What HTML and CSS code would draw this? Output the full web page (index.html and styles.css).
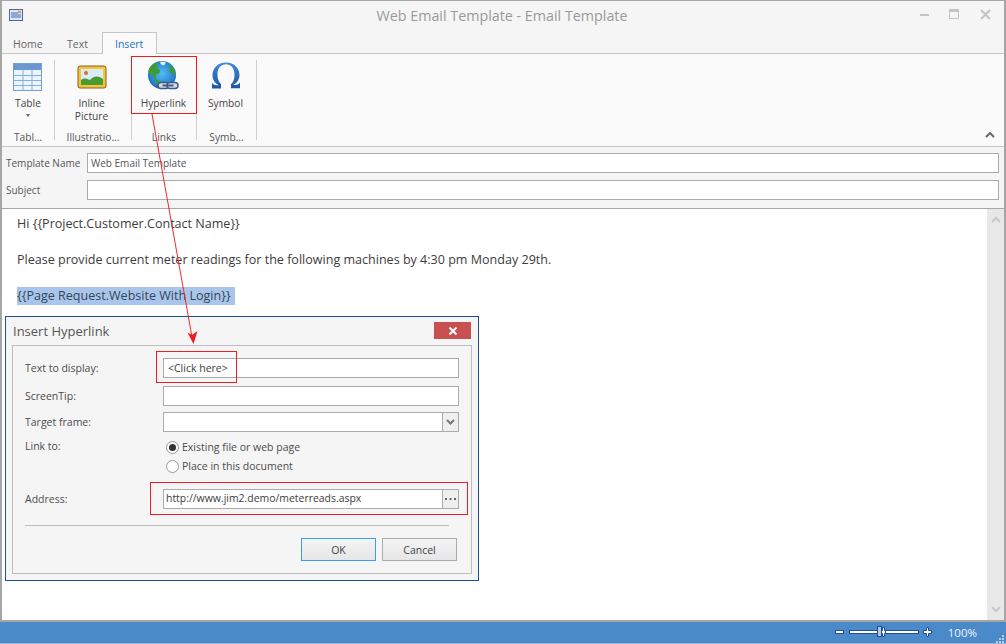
FILE: index.html
```html
<!DOCTYPE html>
<html lang="en">
<head>
<meta charset="utf-8">
<title>Web Email Template - Email Template</title>
<link rel="stylesheet" href="styles.css">
</head>
<body>
<div class="window">
  <header class="titlebar">
    <svg class="app-icon" width="14" height="12" viewBox="0 0 14 12"><rect x=".5" y=".5" width="13" height="11" fill="#dbe6f7" stroke="#5a5f9e"/><path d="M2 4h7M2 6h10M2 8h10" stroke="#3f6fb5"/><path d="M9 3h3" stroke="#e8963a" stroke-width="2"/></svg>
    <div class="title">Web Email Template - Email Template</div>
    <div class="win-controls">
      <svg width="9" height="3" viewBox="0 0 9 3"><rect width="9" height="2" y="1" fill="#c4c4c4"/></svg>
      <svg width="11" height="11" viewBox="0 0 11 11"><rect x=".5" y=".5" width="9" height="9" fill="none" stroke="#c4c4c4"/><rect width="10" height="3" fill="#c4c4c4"/></svg>
      <svg width="11" height="11" viewBox="0 0 11 11"><path d="M1 1l9 9M10 1l-9 9" stroke="#c4c4c4" stroke-width="2"/></svg>
    </div>
  </header>
  <nav class="tabs">
    <div class="tab">Home</div>
    <div class="tab tab-text">Text</div>
    <div class="tab active">Insert</div>
  </nav>
  <section class="ribbon">
    <div class="group g1">
      <div class="tool">
        <svg class="ic" width="30" height="28" viewBox="0 0 30 28">
          <rect x=".5" y=".5" width="28" height="27" fill="#eef4fc" stroke="#6fa0d8"/>
          <rect x="1" y="1" width="27" height="6" fill="#6d97cf"/>
          <path d="M1 12.500h27M1 17.500h27M1 22.500h27M10 7v20M19 7v20" stroke="#85aee0"/>
        </svg>
        <div class="lbl">Table</div>
        <div class="caret"></div>
      </div>
      <div class="glabel">Tabl...</div>
    </div>
    <div class="group g2">
      <div class="tool">
        <svg class="ic" width="30" height="28" viewBox="0 0 30 28">
          <rect x="1" y="3" width="28" height="22" rx="2" fill="#f3c53c" stroke="#8a5a1c"/>
          <rect x="4" y="6" width="22" height="16" fill="#d8ecf8"/>
          <circle cx="9" cy="10" r="2" fill="#e0662a"/>
          <path d="M4 22v-5c4-3 6-1 9 0 3-4 8-5 13-1v6z" fill="#4a9a34"/>
        </svg>
        <div class="lbl">Inline<br>Picture</div>
      </div>
      <div class="glabel">Illustratio...</div>
    </div>
    <div class="group g3">
      <div class="tool">
        <svg class="ic" width="32" height="32" viewBox="0 0 32 32">
          <defs>
            <radialGradient id="gl" cx=".5" cy=".45" r=".6"><stop offset="0" stop-color="#55bdf2"/><stop offset=".75" stop-color="#2480d2"/><stop offset="1" stop-color="#174c92"/></radialGradient>
          </defs>
          <circle cx="15" cy="14" r="14" fill="url(#gl)"/>
          <path d="M9 1.500C5 3 2 6 1.500 11c2 3 5 4 6 7 1 2 1.500 4 2.500 6l7-1c-2-3-5-3-7-4-2-2-2-5 0-6 3 0 4-3 2-5-2 0-2-3-1-7.500zM21 3c2 2 2 5 1 7 2 2 4 3 6 5 1-5-2-10-7-12z" fill="#3f9a3a"/>
          <path d="M13 1c2-.5 4-.5 6 .5l-2 3-3-1z" fill="#dff0f5"/>
          <rect x="11" y="21.500" width="11" height="6" rx="3" fill="#d4dce6" stroke="#3f5b84" stroke-width="1.500"/>
          <rect x="20" y="21.500" width="11" height="6" rx="3" fill="#d4dce6" stroke="#3f5b84" stroke-width="1.500"/>
          <rect x="15.500" y="23.500" width="11" height="2" fill="#3f5b84"/>
        </svg>
        <div class="lbl">Hyperlink</div>
      </div>
      <div class="glabel">Links</div>
    </div>
    <div class="group g4">
      <div class="tool">
        <svg class="ic" width="32" height="32" viewBox="0 0 32 32" role="img" aria-label="Omega">
          <defs><linearGradient id="om" x1="0" y1="0" x2="0" y2="1"><stop offset="0" stop-color="#3f8bd8"/><stop offset="1" stop-color="#1c559f"/></linearGradient></defs>
          <path d="M11 27.500H2v-6l1 1.500c1 1 2 1.200 6 1.200-4-2-6.500-5.500-6.500-10C2.500 7 8 1.500 16 1.500S29.500 7 29.500 14c0 4.500-2.500 8-6.500 10 4 0 5 -.2 6-1.200l1-1.500v6h-9v-4c2.500-2 3.500-5.500 3.500-9.500 0-6-3-10.500-8.500-10.500S7.500 7.500 7.500 13.500c0 4 1 7.500 3.500 9.500z" fill="url(#om)"/>
        </svg>
        <div class="lbl">Symbol</div>
      </div>
      <div class="glabel">Symb...</div>
    </div>
    <svg class="collapse" width="10" height="6" viewBox="0 0 10 6"><path d="M1 5l4-4 4 4" fill="none" stroke="#666" stroke-width="2"/></svg>
  </section>
  <section class="meta">
    <div class="meta-row"><label class="meta-label">Template Name</label><div class="field">Web Email Template</div></div>
    <div class="meta-row"><label class="meta-label">Subject</label><div class="field"></div></div>
  </section>
  <main class="editor">
    <div class="body-text">
      <p class="p1">Hi {{Project.Customer.Contact Name}}</p>
      <p class="p2">Please provide current meter readings for the following machines by 4:30 pm Monday 29th.</p>
      <p class="p3"><span class="sel">{{Page Request.Website With Login}}&nbsp;</span></p>
    </div>
    <div class="scrollbar">
      <svg width="10" height="7" viewBox="0 0 10 7"><path d="M1 6l4-4 4 4" fill="none" stroke="#c8c8c8" stroke-width="2"/></svg>
      <svg width="10" height="7" viewBox="0 0 10 7"><path d="M1 1l4 4 4-4" fill="none" stroke="#c8c8c8" stroke-width="2"/></svg>
    </div>
  </main>
  <footer class="status">
    <svg class="zoom" width="98" height="14" viewBox="0 0 98 14">
      <g fill="#fff" stroke="#1f4e96" stroke-width="1">
        <rect x=".5" y="5.500" width="8" height="3"/>
        <rect x="14.500" y="5.500" width="69" height="3"/>
        <path d="M88.500 5.500h3v-3h2v3h3v3h-3v3h-2v-3h-3z"/>
        <path d="M46.500 5.500h1v-3h2v3h1v3h-1v3h-2v-3h-1z"/>
      </g>
      <rect x="42.500" y="1.500" width="4" height="10" fill="#a8cdf0" stroke="#1f4e96"/>
    </svg>
    <span class="pct">100%</span>
    <svg class="grip" width="8" height="8" viewBox="0 0 8 8"><path d="M6 0h2v2H6zM3 3h2v2H3zM6 3h2v2H6zM0 6h2v2H0zM3 6h2v2H3zM6 6h2v2H6z" fill="#b8cfe6"/></svg>
  </footer>

  <div class="dialog">
    <div class="dlg-head">
      <span class="dlg-title">Insert Hyperlink</span>
      <div class="dlg-close"><svg width="10" height="8" viewBox="0 0 10 8"><path d="M1.500 .5l7 7M8.500 .5l-7 7" stroke="#fff" stroke-width="2"/></svg></div>
    </div>
    <div class="dlg-panel">
      <div class="d-row r1"><span class="d-label">Text to display:</span><div class="d-input">&lt;Click here&gt;</div></div>
      <div class="d-row r2"><span class="d-label">ScreenTip:</span><div class="d-input"></div></div>
      <div class="d-row r3"><span class="d-label">Target frame:</span><div class="d-input has-btn"><span class="d-val"></span><span class="d-btn"><svg width="9" height="6" viewBox="0 0 9 6"><path d="M1 1l3.500 3.500L8 1" fill="none" stroke="#777" stroke-width="2"/></svg></span></div></div>
      <div class="d-row r4">
        <span class="d-label">Link to:</span>
        <div class="radios">
          <div class="radio-row"><span class="radio on"></span>Existing file or web page</div>
          <div class="radio-row"><span class="radio"></span>Place in this document</div>
        </div>
      </div>
      <div class="d-row r5"><span class="d-label">Address:</span><div class="d-input has-btn"><span class="d-val addr">http://www.jim2.demo/meterreads.aspx</span><span class="d-btn"><svg width="11" height="2" viewBox="0 0 11 2"><path d="M0 0h2v2H0zM4.500 0h2v2h-2zM9 0h2v2H9z" fill="#666"/></svg></span></div></div>
      <div class="d-rule"></div>
      <div class="d-actions"><button class="btn default">OK</button><button class="btn">Cancel</button></div>
    </div>
  </div>

  <div class="red red-a"></div>
  <div class="red red-b"></div>
  <div class="red red-c"></div>
  <svg class="arrow" width="60" height="240" viewBox="0 0 60 240"><path d="M1 1L41 224" stroke="#ee2a2a" stroke-width="1" fill="none"/><path d="M42.500 231L36.500 219.500 41 222 46.500 218z" fill="#ee1c1c"/></svg>
</div>
</body>
</html>
```
FILE: styles.css
```css
* { box-sizing: border-box; }
html, body { margin: 0; padding: 0; }
body { width: 1006px; height: 644px; overflow: hidden; font-family: "Open Sans", "Noto Sans", sans-serif; font-size: 10.500px; color: #444; }
.window { position: relative; width: 1006px; height: 644px; display: flex; flex-direction: column; background: #f5f5f5; border: 1px solid #a6a6a6; border-width: 1px 2px 0 2px; }
.titlebar { height: 31px; flex: none; display: grid; grid-template-columns: 1fr auto 1fr; align-items: center; padding: 0 9px 2px 7px; }
.app-icon { position: relative; top: -1px; }
.title { text-align: center; font-size: 14.300px; color: #9a9a9a; }
.win-controls { justify-self: end; display: flex; align-items: center; gap: 20px; margin-right: 4px; position: relative; top: -1px; }
.tabs { height: 22px; flex: none; display: flex; border-bottom: 1px solid #c6c6c6; }
.tab { height: 22px; padding: 5px 0 0 11px; width: 49px; color: #666; font-size: 10.500px; }
.tab-text { width: 51px; padding-left: 16px; }
.tab.active { width: 55px; padding: 4px 0 0 12px; background: #fafafa; border: 1px solid #c6c6c6; border-bottom: 0; color: #1a72c4; }
.ribbon { height: 93px; flex: none; display: flex; position: relative; background: #fafafa; border-bottom: 1px solid #c6c6c6; }
.group { position: relative; display: flex; flex-direction: column; align-items: center; height: 92px; padding-top: 6px; font-size: 10.200px; }
.group::after { content: ""; position: absolute; right: 0; top: 6px; width: 1px; height: 80px; background: #cfcfcf; }
.g1 { width: 53px; }
.g2 { width: 77px; }
.g3 { width: 65px; }
.g4 { width: 60px; }
.tool { flex: 1; display: flex; flex-direction: column; align-items: center; padding-right: 3px; }
.g1 .tool { padding-right: 1px; }
.g2 .tool { padding-right: 4px; }
.g3 .tool { padding-right: 2px; }
.ic { flex: none; display: block; height: 32px; margin-top: 1px; }
.lbl { text-align: center; line-height: 13px; margin-top: 4px; color: #444; white-space: nowrap; }
.caret { width: 0; height: 0; border: 2.500px solid transparent; border-top: 3px solid #666; margin-top: 4px; }
.glabel { height: 16px; color: #555; white-space: nowrap; padding-right: 1px; }
.collapse { position: absolute; right: 9px; bottom: 8px; }
.meta { height: 62px; flex: none; padding: 6px 5px 0 4px; display: flex; flex-direction: column; gap: 7px; background: #f5f5f5; border-bottom: 1px solid #a6a6a6; font-size: 10px; }
.meta-row { display: flex; align-items: center; height: 20px; }
.meta-label { width: 81px; flex: none; color: #555; }
.field { flex: 1; height: 20px; background: #fff; border: 1px solid #ababab; padding: 2px 3px; line-height: 14px; color: #555; }
.editor { flex: 1; display: flex; background: #fff; min-height: 0; }
.body-text { flex: 1; padding-left: 15px; font-size: 12.550px; color: #3c3c3c; }
.body-text p { margin: 0; height: 18px; line-height: 18px; }
.body-text .p1 { margin-top: 6px; }
.body-text .p2 { margin-top: 18px; }
.body-text .p3 { margin-top: 18px; }
.sel { background: #a9c6ea; color: #33475f; display: inline-block; padding-right: 1px; }
.scrollbar { width: 17px; background: #e8e8e8; display: flex; flex-direction: column; justify-content: space-between; align-items: center; padding: 7px 0; }
.status { height: 24px; flex: none; margin: 0 -2px; background: #4a8ac9; border-top: 2px solid #a6a6a6; border-bottom: 1px solid #9fb6cd; display: flex; align-items: center; justify-content: flex-end; color: #fff; position: relative; padding-right: 29px; }
.zoom { margin: 0 15px 2px 0; }
.pct { font-size: 11.500px; color: #eef4fb; }
.grip { position: absolute; right: 2px; bottom: 0; }
.dialog { position: absolute; left: 3px; top: 315px; width: 474px; height: 265px; background: #f5f5f5; border: 1px solid #1c4f94; padding: 0 6px 6px 6px; display: flex; flex-direction: column; }
.dlg-head { height: 28px; flex: none; display: flex; align-items: flex-start; justify-content: space-between; }
.dlg-title { font-size: 13px; color: #555; margin: 5px 0 0 1px; }
.dlg-close { width: 37px; height: 17px; margin: 5px 1px 0 0; background: #c75050; display: flex; align-items: center; justify-content: center; }
.dlg-panel { flex: 1; border: 1px solid #bdbdbd; padding: 12px 12px 0 12px; display: flex; flex-direction: column; }
.d-row { display: flex; align-items: center; }
.d-label { width: 138px; flex: none; color: #4c4c4c; }
.d-input { width: 296px; height: 20px; background: #fff; border: 1px solid #ababab; line-height: 18px; padding-left: 4px; color: #3c3c3c; display: flex; }
.has-btn { padding-left: 0; }
.d-val { flex: 1; padding-left: 2px; }
.addr { font-size: 10.450px; line-height: 17px; }
.d-btn { width: 16px; flex: none; background: #efefef; border-left: 1px solid #ababab; display: flex; align-items: center; justify-content: center; }
.r2 { margin-top: 8px; }
.r3 { margin-top: 6px; }
.r4 { margin-top: 7px; align-items: flex-start; }
.radios { display: flex; flex-direction: column; gap: 3px; padding-left: 3px; }
.radio-row { display: flex; align-items: center; height: 16px; gap: 3px; color: #4c4c4c; }
.radio { width: 13px; height: 13px; flex: none; border-radius: 50%; border: 1px solid #9a9a9a; background: #fff; display: flex; align-items: center; justify-content: center; }
.radio.on::after { content: ""; width: 7px; height: 7px; border-radius: 50%; background: #333; }
.r5 { margin-top: 15px; }
.d-rule { width: 424px; height: 1px; background: #bdbdbd; margin-top: 16px; flex: none; }
.d-actions { display: flex; justify-content: flex-end; gap: 6px; margin-top: 12px; padding-right: 2px; }
.btn { width: 75px; height: 23px; font: inherit; color: #444; padding: 0; background: linear-gradient(#f4f4f4, #e6e6e6); border: 1px solid #ababab; }
.btn.default { border-color: #3f9bf0; }
.red { position: absolute; border: 1px solid #ee1c25; pointer-events: none; }
.red-a { left: 129px; top: 55px; width: 66px; height: 58px; border-color: #f01a1a; }
.red-b { left: 154px; top: 350px; width: 81px; height: 32px; }
.red-c { left: 148px; top: 481px; width: 318px; height: 33px; }
.arrow { position: absolute; left: 149px; top: 112px; overflow: visible; }
```
